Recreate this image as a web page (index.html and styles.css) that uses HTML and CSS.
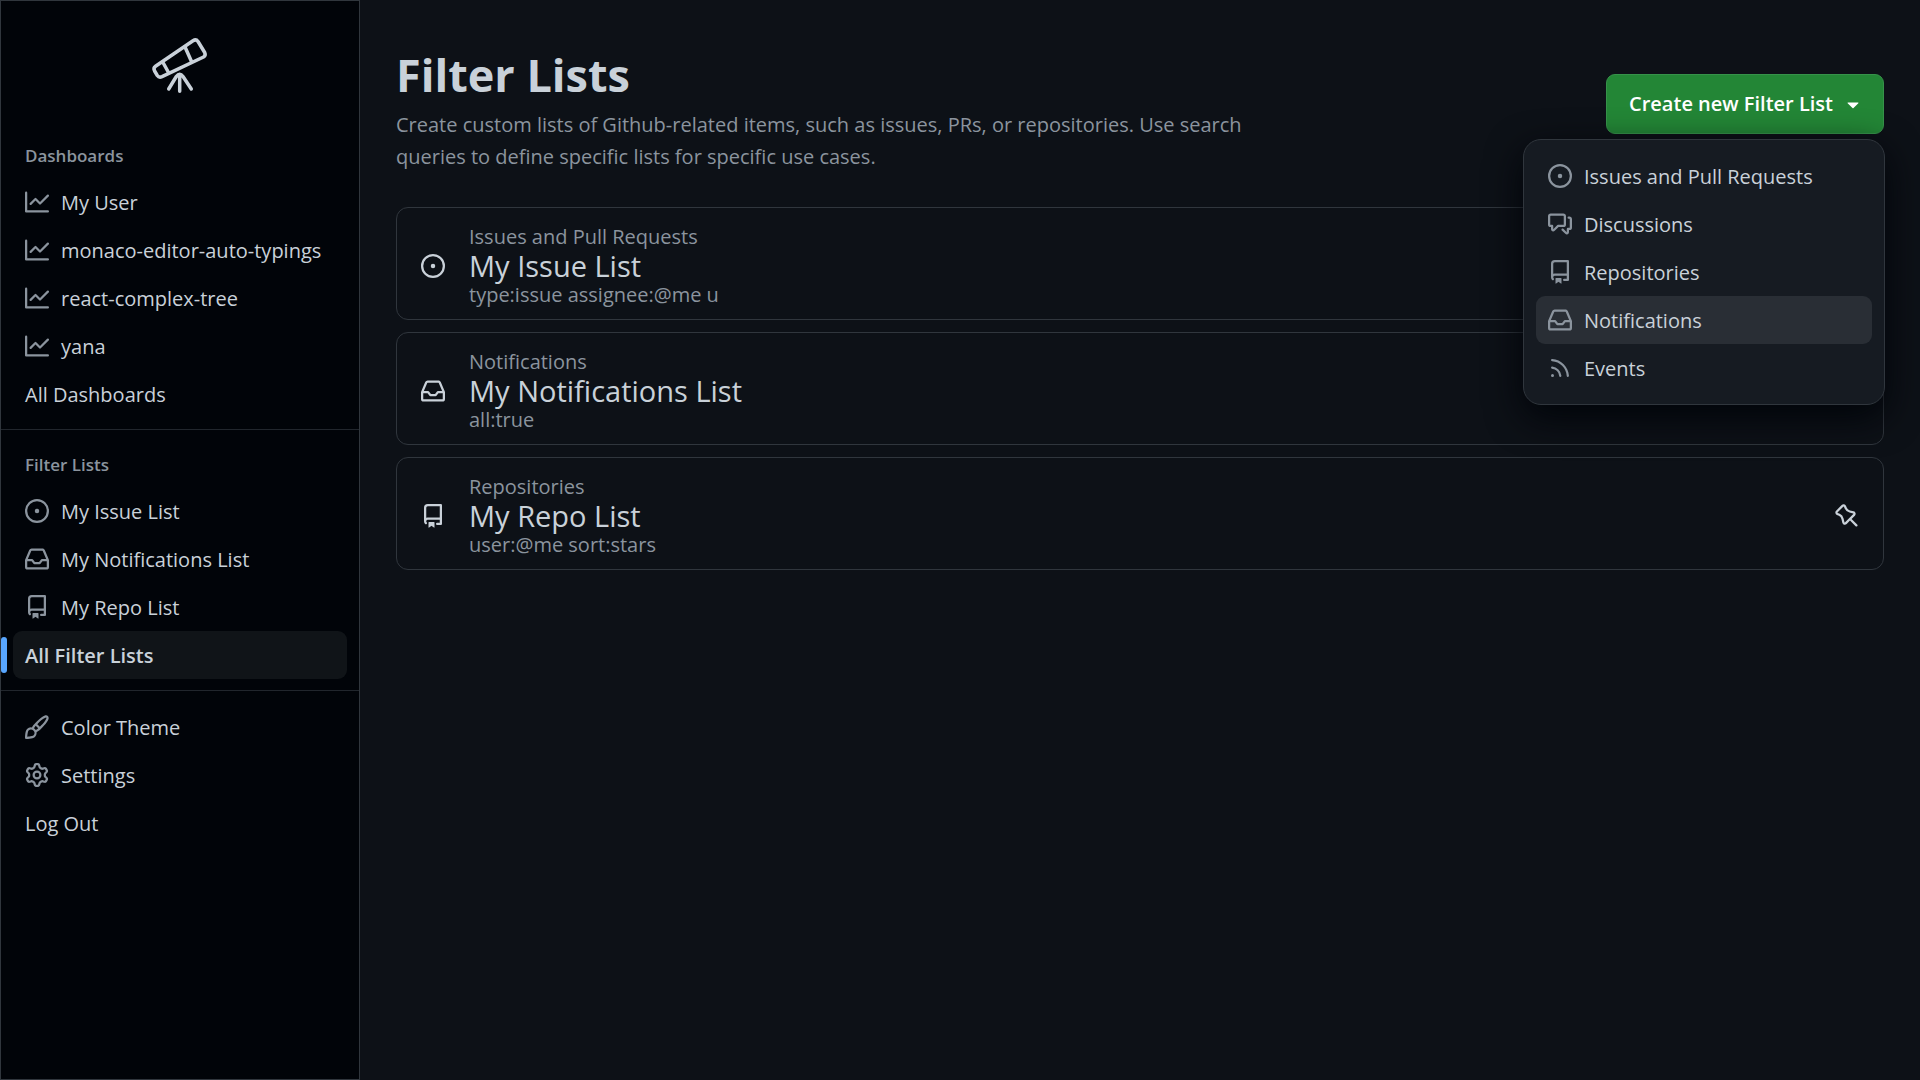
FILE: index.html
```html
<!DOCTYPE html>
<html lang="en">
<head>
<meta charset="utf-8">
<title>Filter Lists</title>
<link rel="stylesheet" href="styles.css">
</head>
<body>
<svg class="sprite" aria-hidden="true">
  <symbol id="graph" viewBox="0 0 16 16"><path d="M1.5 1.75V13.5h13.75a.75.75 0 0 1 0 1.5H.75a.75.75 0 0 1-.75-.75V1.75a.75.75 0 0 1 1.5 0Zm14.28 2.53-5.25 5.25a.75.75 0 0 1-1.06 0L7 7.06 4.28 9.78a.751.751 0 0 1-1.042-.018.751.751 0 0 1-.018-1.042l3.25-3.25a.75.75 0 0 1 1.06 0L10 7.94l4.72-4.72a.751.751 0 0 1 1.042.018.751.751 0 0 1 .018 1.042Z"/></symbol>
  <symbol id="issue" viewBox="0 0 16 16"><path d="M8 9.5a1.5 1.5 0 1 0 0-3 1.5 1.5 0 0 0 0 3Z"/><path d="M8 0a8 8 0 1 1 0 16A8 8 0 0 1 8 0ZM1.5 8a6.5 6.5 0 1 0 13 0 6.5 6.5 0 0 0-13 0Z"/></symbol>
  <symbol id="inbox" viewBox="0 0 16 16"><path d="M2.8 2.06A1.75 1.75 0 0 1 4.41 1h7.18c.7 0 1.333.417 1.61 1.06l2.74 6.395c.04.093.06.194.06.295v4.5A1.75 1.75 0 0 1 14.25 15H1.75A1.75 1.75 0 0 1 0 13.25v-4.5c0-.101.02-.202.06-.295Zm1.61.44a.25.25 0 0 0-.23.152L1.887 8H4.75a.75.75 0 0 1 .6.3L6.625 10h2.75l1.275-1.7a.75.75 0 0 1 .6-.3h2.863L11.82 2.652a.25.25 0 0 0-.23-.152Zm10.09 7h-2.875l-1.275 1.7a.75.75 0 0 1-.6.3h-3.5a.75.75 0 0 1-.6-.3L4.375 9.5H1.5v3.75c0 .138.112.25.25.25h12.5a.25.25 0 0 0 .25-.25Z"/></symbol>
  <symbol id="repo" viewBox="0 0 16 16"><path d="M2 2.5A2.5 2.5 0 0 1 4.5 0h8.75a.75.75 0 0 1 .75.75v12.5a.75.75 0 0 1-.75.75h-2.5a.75.75 0 0 1 0-1.5h1.75v-2h-8a1 1 0 0 0-.714 1.7.75.75 0 1 1-1.072 1.05A2.495 2.495 0 0 1 2 11.5Zm10.5-1h-8a1 1 0 0 0-1 1v6.708A2.486 2.486 0 0 1 4.5 9h8ZM5 12.25a.25.25 0 0 1 .25-.25h3.5a.25.25 0 0 1 .25.25v3.25a.25.25 0 0 1-.4.2l-1.45-1.087a.249.249 0 0 0-.3 0L5.4 15.7a.25.25 0 0 1-.4-.2Z"/></symbol>
  <symbol id="discussion" viewBox="0 0 16 16"><path d="M1.75 1h8.5c.966 0 1.75.784 1.75 1.75v5.5A1.75 1.75 0 0 1 10.25 10H7.061l-2.574 2.573A1.458 1.458 0 0 1 2 11.543V10h-.25A1.75 1.75 0 0 1 0 8.25v-5.5C0 1.784.784 1 1.75 1ZM1.5 2.75v5.5c0 .138.112.25.25.25h1a.75.75 0 0 1 .75.75v2.19l2.72-2.72a.749.749 0 0 1 .53-.22h3.5a.25.25 0 0 0 .25-.25v-5.5a.25.25 0 0 0-.25-.25h-8.5a.25.25 0 0 0-.25.25Zm13 2a.25.25 0 0 0-.25-.25h-.5a.75.75 0 0 1 0-1.5h.5c.966 0 1.75.784 1.75 1.75v5.5A1.75 1.75 0 0 1 14.25 12H14v1.543a1.458 1.458 0 0 1-2.487 1.03L9.22 12.28a.749.749 0 0 1 .326-1.275.749.749 0 0 1 .734.215l2.22 2.22v-2.19a.75.75 0 0 1 .75-.75h1a.25.25 0 0 0 .25-.25Z"/></symbol>
  <symbol id="rss" viewBox="0 0 16 16"><path d="M2.002 2.725a.75.75 0 0 1 .797-.699C8.79 2.42 13.58 7.21 13.974 13.201a.75.75 0 0 1-1.497.098 10.502 10.502 0 0 0-9.776-9.776.747.747 0 0 1-.7-.798ZM2.84 7.05h-.002a7.002 7.002 0 0 1 6.113 6.111.75.75 0 0 1-1.49.178 5.503 5.503 0 0 0-4.8-4.8.75.75 0 0 1 .179-1.489ZM2 13a1 1 0 1 1 2 0 1 1 0 0 1-2 0Z"/></symbol>
  <symbol id="brush" viewBox="0 0 16 16"><path d="M11.134 1.535c.7-.509 1.416-.942 2.076-1.155.649-.21 1.463-.267 2.069.34.603.601.568 1.411.368 2.07-.202.668-.624 1.39-1.125 2.096-1.011 1.424-2.496 2.987-3.775 4.249-1.098 1.084-2.132 1.839-3.04 2.3a3.744 3.744 0 0 1-1.055 3.217c-.431.431-1.065.691-1.657.861-.614.177-1.294.287-1.914.357A21.151 21.151 0 0 1 .797 16H.743l.007-.75H.749L.742 16a.75.75 0 0 1-.743-.742l.743-.008-.742.007v-.054a21.25 21.25 0 0 1 .13-2.284c.067-.647.187-1.287.358-1.914.17-.591.43-1.226.86-1.657a3.746 3.746 0 0 1 3.227-1.054c.466-.893 1.225-1.907 2.314-2.982 1.271-1.255 2.833-2.75 4.245-3.777ZM1.62 13.089c-.051.464-.086.929-.104 1.395.466-.018.932-.053 1.396-.104a10.511 10.511 0 0 0 1.668-.309c.526-.151.856-.325 1.011-.48a2.25 2.25 0 1 0-3.182-3.182c-.155.155-.329.485-.48 1.01a10.515 10.515 0 0 0-.309 1.67Zm10.396-10.34c-1.224.89-2.605 2.189-3.822 3.384l1.718 1.718c1.21-1.205 2.51-2.597 3.387-3.833.47-.662.78-1.227.912-1.662.134-.444.032-.551.009-.575h-.001V1.78c-.014-.014-.113-.113-.548.027-.432.14-.995.462-1.655.942Zm-4.832 7.266-.001.001a9.859 9.859 0 0 0 1.63-1.142L7.155 7.216a9.7 9.7 0 0 0-1.161 1.607c.482.302.889.71 1.19 1.192Z"/></symbol>
  <symbol id="gear" viewBox="0 0 16 16"><path d="M8 0a8.2 8.2 0 0 1 .701.031C9.444.095 9.99.645 10.16 1.29l.288 1.107c.018.066.079.158.212.224.231.114.454.243.668.386.123.082.233.09.299.071l1.103-.303c.644-.176 1.392.021 1.82.63.27.385.506.792.704 1.218.315.675.111 1.422-.364 1.891l-.814.806c-.049.048-.098.147-.088.294.016.257.016.515 0 .772-.01.147.038.246.088.294l.814.806c.475.469.679 1.216.364 1.891a7.977 7.977 0 0 1-.704 1.217c-.428.61-1.176.807-1.82.63l-1.102-.302c-.067-.019-.177-.011-.3.071a5.909 5.909 0 0 1-.668.386c-.133.066-.194.158-.211.224l-.29 1.106c-.168.646-.715 1.196-1.458 1.26a8.006 8.006 0 0 1-1.402 0c-.743-.064-1.289-.614-1.458-1.26l-.289-1.106c-.018-.066-.079-.158-.212-.224a5.738 5.738 0 0 1-.668-.386c-.123-.082-.233-.09-.299-.071l-1.103.303c-.644.176-1.392-.021-1.82-.63a8.12 8.12 0 0 1-.704-1.218c-.315-.675-.111-1.422.363-1.891l.815-.806c.05-.048.098-.147.088-.294a6.214 6.214 0 0 1 0-.772c.01-.147-.038-.246-.088-.294l-.815-.806C.635 6.045.431 5.298.746 4.623a7.92 7.92 0 0 1 .704-1.217c.428-.61 1.176-.807 1.82-.63l1.102.302c.067.019.177.011.3-.071.214-.143.437-.272.668-.386.133-.066.194-.158.211-.224l.29-1.106C6.009.645 6.556.095 7.299.03 7.53.01 7.764 0 8 0Zm-.571 1.525c-.036.003-.108.036-.137.146l-.289 1.105c-.147.561-.549.967-.998 1.189-.173.086-.34.183-.5.29-.417.278-.97.423-1.529.27l-1.103-.303c-.109-.03-.175.016-.195.045-.22.312-.412.644-.573.99-.014.031-.021.11.059.19l.815.806c.411.406.562.957.53 1.456a4.709 4.709 0 0 0 0 .582c.032.499-.119 1.05-.53 1.456l-.815.806c-.081.08-.073.159-.059.19.162.346.353.677.573.989.02.03.085.076.195.046l1.102-.303c.56-.153 1.113-.008 1.53.27.161.107.328.204.501.29.447.222.85.629.997 1.189l.289 1.105c.029.109.101.143.137.146a6.6 6.6 0 0 0 1.142 0c.036-.003.108-.036.137-.146l.289-1.105c.147-.561.549-.967.998-1.189.173-.086.34-.183.5-.29.417-.278.97-.423 1.529-.27l1.103.303c.109.029.175-.016.195-.045.22-.313.411-.644.573-.99.014-.031.021-.11-.059-.19l-.815-.806c-.411-.406-.562-.957-.53-1.456a4.709 4.709 0 0 0 0-.582c-.032-.499.119-1.05.53-1.456l.815-.806c.081-.08.073-.159.059-.19a6.464 6.464 0 0 0-.573-.989c-.02-.03-.085-.076-.195-.046l-1.102.303c-.56.153-1.113.008-1.53-.27a4.44 4.44 0 0 0-.501-.29c-.447-.222-.85-.629-.997-1.189l-.289-1.105c-.029-.11-.101-.143-.137-.146a6.6 6.6 0 0 0-1.142 0ZM11 8a3 3 0 1 1-6 0 3 3 0 0 1 6 0ZM9.5 8a1.5 1.5 0 1 0-3.001.001A1.5 1.5 0 0 0 9.5 8Z"/></symbol>
  <symbol id="pin" viewBox="0 0 16 16"><path d="M4.456.734a1.75 1.75 0 012.826.504l.613 1.327a3.081 3.081 0 002.084 1.707l2.454.584c1.332.317 1.8 1.972.832 2.94L11.06 10l3.72 3.72a.75.75 0 11-1.061 1.06L10 11.06l-2.204 2.205c-.968.968-2.623.5-2.94-.832l-.584-2.454a3.081 3.081 0 00-1.707-2.084l-1.327-.613a1.75 1.75 0 01-.504-2.826L4.456.734zM5.92 1.866a.25.25 0 00-.404-.072L1.794 5.516a.25.25 0 00.072.404l1.328.613A4.582 4.582 0 015.73 9.63l.584 2.454a.25.25 0 00.42.12l5.47-5.47a.25.25 0 00-.12-.42L9.63 5.73a4.581 4.581 0 01-3.098-2.537L5.92 1.866z"/></symbol>
  <symbol id="caret" viewBox="0 0 16 16"><path d="m4.427 7.427 3.396 3.396a.25.25 0 0 0 .354 0l3.396-3.396A.25.25 0 0 0 11.396 7H4.604a.25.25 0 0 0-.177.427Z"/></symbol>
</svg>

<div class="app">
  <aside class="sidebar">
    <a class="logo" href="#" aria-label="Home">
      <svg viewBox="0 0 60 60" aria-hidden="true">
        <path d="M5.500 30.300 43 4.800Q46 2.800 48 5.500L54.700 16.500Q56 19.500 53.500 21L12 40.700Q9 42 7.300 39.500L4.600 35Q3 32 5.500 30.300Z"/>
        <path d="m13 26.500 5.500 10M35 11l6.500 14.500M29.700 39V55.300M18.700 53l7.600-12.500Q29.700 36 33 40.500L41.300 53"/>
      </svg>
    </a>
    <nav class="group" aria-labelledby="nav-dashboards">
      <h2 class="group-title" id="nav-dashboards">Dashboards</h2>
      <a class="item" href="#"><svg class="icon"><use href="#graph"/></svg>My User</a>
      <a class="item" href="#"><svg class="icon"><use href="#graph"/></svg>monaco-editor-auto-typings</a>
      <a class="item" href="#"><svg class="icon"><use href="#graph"/></svg>react-complex-tree</a>
      <a class="item" href="#"><svg class="icon"><use href="#graph"/></svg>yana</a>
      <a class="item" href="#">All Dashboards</a>
    </nav>
    <nav class="group" aria-labelledby="nav-lists">
      <h2 class="group-title" id="nav-lists">Filter Lists</h2>
      <a class="item" href="#"><svg class="icon"><use href="#issue"/></svg>My Issue List</a>
      <a class="item" href="#"><svg class="icon"><use href="#inbox"/></svg>My Notifications List</a>
      <a class="item" href="#"><svg class="icon"><use href="#repo"/></svg>My Repo List</a>
      <a class="item current" href="#" aria-current="page">All Filter Lists</a>
    </nav>
    <nav class="group" aria-label="Account">
      <a class="item" href="#"><svg class="icon"><use href="#brush"/></svg>Color Theme</a>
      <a class="item" href="#"><svg class="icon"><use href="#gear"/></svg>Settings</a>
      <a class="item" href="#">Log Out</a>
    </nav>
  </aside>

  <main class="content">
    <header class="page-head">
      <div class="intro">
        <h1>Filter Lists</h1>
        <p>Create custom lists of Github-related items, such as issues, PRs, or repositories. Use search queries to define specific lists for specific use cases.</p>
      </div>
      <div class="create">
        <button class="create-button" type="button" aria-haspopup="menu" aria-expanded="true">Create new Filter List<svg class="icon"><use href="#caret"/></svg></button>
        <div class="menu" role="menu">
          <button class="item" type="button" role="menuitem"><svg class="icon"><use href="#issue"/></svg>Issues and Pull Requests</button>
          <button class="item" type="button" role="menuitem"><svg class="icon"><use href="#discussion"/></svg>Discussions</button>
          <button class="item" type="button" role="menuitem"><svg class="icon"><use href="#repo"/></svg>Repositories</button>
          <button class="item active" type="button" role="menuitem"><svg class="icon"><use href="#inbox"/></svg>Notifications</button>
          <button class="item" type="button" role="menuitem"><svg class="icon"><use href="#rss"/></svg>Events</button>
        </div>
      </div>
    </header>

    <section class="cards" aria-label="Lists">
      <article class="card">
        <svg class="icon"><use href="#issue"/></svg>
        <div class="card-text"><p>Issues and Pull Requests</p><h2>My Issue List</h2><p>type:issue assignee:@me u</p></div>
        <button class="pin" type="button" aria-label="Pin"><svg class="icon"><use href="#pin"/></svg></button>
      </article>
      <article class="card">
        <svg class="icon"><use href="#inbox"/></svg>
        <div class="card-text"><p>Notifications</p><h2>My Notifications List</h2><p>all:true</p></div>
        <button class="pin" type="button" aria-label="Pin"><svg class="icon"><use href="#pin"/></svg></button>
      </article>
      <article class="card">
        <svg class="icon"><use href="#repo"/></svg>
        <div class="card-text"><p>Repositories</p><h2>My Repo List</h2><p>user:@me sort:stars</p></div>
        <button class="pin" type="button" aria-label="Pin"><svg class="icon"><use href="#pin"/></svg></button>
      </article>
    </section>
  </main>
</div>
</body>
</html>
```
FILE: styles.css
```css
* { box-sizing: border-box; }

body {
  margin: 0;
  background: #0d1117;
  color: #c9d1d9;
  font: 20px/32px "Open Sans", "Noto Sans", sans-serif;
}

h1, h2, p { margin: 0; font-weight: 400; }
a { color: inherit; text-decoration: none; }
button { margin: 0; border: 0; background: none; color: inherit; font: inherit; cursor: pointer; }

.sprite { display: none; }
.icon { flex: none; width: 24px; height: 24px; fill: currentColor; }

.app { display: flex; min-height: 100vh; }

.sidebar {
  flex: none;
  width: 360px;
  border: 1px solid #30363d;
  background: #010409;
}

.logo { display: flex; justify-content: center; padding: 35px 0 37px; }
.logo svg {
  width: 60px;
  height: 60px;
  fill: none;
  stroke: #c9d1d9;
  stroke-width: 3.5;
  stroke-linecap: round;
  stroke-linejoin: round;
}

.group { padding: 12px 12px 11px; }
.group + .group { border-top: 1px solid #21262d; }
.logo + .group { padding-top: 0; }

.group-title {
  padding: 7px 12px;
  color: #8b949e;
  font-size: 17px;
  font-weight: 600;
  line-height: 31px;
}

.item {
  display: flex;
  align-items: center;
  gap: 12px;
  width: 100%;
  height: 48px;
  padding: 2px 12px 0;
  border-radius: 9px;
  text-align: left;
  white-space: nowrap;
}
.item .icon { margin-bottom: 2px; color: #8b949e; }

.current { position: relative; background: #101418; font-weight: 600; }
.current::before {
  content: "";
  position: absolute;
  top: 6px;
  left: -12px;
  width: 6px;
  height: 36px;
  border-radius: 6px;
  background: #58a6ff;
}

.content { flex: 1; min-width: 0; padding: 35px 36px; }

.page-head { display: flex; align-items: center; justify-content: space-between; gap: 36px; }
.intro { max-width: 900px; }
.intro h1 { padding-top: 6px; font-size: 45px; font-weight: 700; line-height: 68px; }
.intro p { color: #8b949e; }

.create { position: relative; }
.create-button {
  display: flex;
  align-items: center;
  gap: 8px;
  height: 60px;
  padding: 0 18px 0 22px;
  border: 1px solid #36924a;
  border-radius: 9px;
  background: #238636;
  color: #fff;
  font-weight: 600;
  white-space: nowrap;
}

.menu {
  position: absolute;
  z-index: 1;
  top: calc(100% + 5px);
  right: -1px;
  width: 362px;
  padding: 12px;
  border: 1px solid #30363d;
  border-radius: 18px;
  background: #161b22;
  box-shadow: 0 12px 36px #010409;
}
.menu .active { background: #292e35; }

.cards { display: grid; gap: 12px; padding-top: 34px; }
.card {
  display: flex;
  align-items: center;
  gap: 24px;
  padding: 15px 24px 10px;
  border: 1px solid #30363d;
  border-radius: 12px;
}
.card-text { flex: 1; min-width: 0; }
.card-text p { color: #8b949e; line-height: 28px; }
.card-text h2 { font-size: 29px; line-height: 30px; }
.pin { display: flex; padding: 0; }
```
